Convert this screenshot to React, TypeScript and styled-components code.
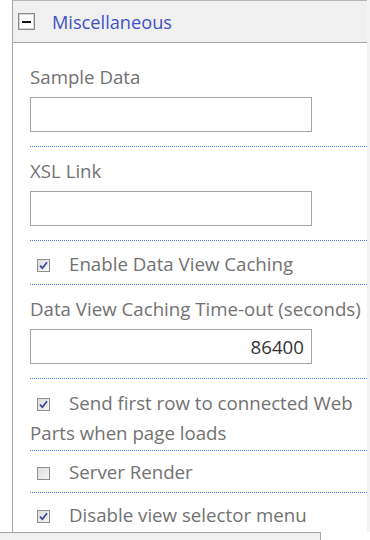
import React from 'react';
import styled, { createGlobalStyle } from 'styled-components';

const GlobalStyle = createGlobalStyle`
  html, body {
    margin: 0;
    padding: 0;
    background: #ffffff;
  }
  body {
    font-family: 'Open Sans', 'Noto Sans', sans-serif;
  }
`;

const Page = styled.div`
  width: 370px;
  height: 540px;
  display: flex;
  flex-direction: column;
  overflow: hidden;
`;

const Frame = styled.div`
  height: 532px;
  flex-shrink: 0;
  display: flex;
`;

const Panel = styled.div`
  margin-left: 12px;
  width: 354px;
  border-left: 1px solid #a6a6a6;
  overflow: hidden;
`;

const ScrollEdge = styled.div`
  flex: 1;
  background: #f3f3f3;
`;

const Footer = styled.div`
  height: 7px;
  width: 320px;
  border-top: 1px solid #a6a6a6;
  border-right: 1px solid #a6a6a6;
  background: #f0f0f0;
`;

const Header = styled.div`
  height: 41px;
  display: flex;
  align-items: center;
  background: #f0f0f0;
  border-top: 1px solid #b4b4b4;
  border-bottom: 1px solid #a6a6a6;
  padding-left: 5px;
`;

const Toggle = styled.span`
  box-sizing: border-box;
  width: 17px;
  height: 17px;
  border: 1px solid #8a8a8a;
  box-shadow: inset 0 0 0 1px #d4d4d4;
  background: #ffffff;
  display: flex;
  align-items: center;
  justify-content: center;
  margin-right: 17px;

  &::after {
    content: '';
    width: 9px;
    height: 2px;
    background: #111111;
  }
`;

const Title = styled.span`
  font-size: 18.2px;
  color: #3f51c6;
  line-height: 24px;
`;

const Field = styled.div<{ $first?: boolean }>`
  margin-left: 17px;
  padding: ${(p) => (p.$first ? '21px' : '11px')} 0 14px 0;
  border-bottom: 1px dotted #4f73d9;
  display: flex;
  flex-direction: column;
  gap: 7px;
`;

const Label = styled.div`
  font-size: 18.7px;
  line-height: 26px;
  color: #727272;
  white-space: nowrap;
`;

const TextBox = styled.div<{ $align?: 'left' | 'right' }>`
  box-sizing: border-box;
  width: 282px;
  height: 35px;
  border: 1px solid #a6a6a6;
  background: #ffffff;
  font-size: 18.7px;
  line-height: 33px;
  color: #333333;
  padding: 0 7px;
  text-align: ${(p) => p.$align ?? 'left'};
`;

const CheckRow = styled.div<{ $top: number; $bottom: number }>`
  margin-left: 17px;
  padding: ${(p) => p.$top}px 0 ${(p) => p.$bottom}px;
  border-bottom: 1px dotted #4f73d9;
  font-size: 18.7px;
  line-height: 30px;
  color: #727272;
`;

const LastRow = styled(CheckRow)`
  border-bottom: none;
`;

const Box = styled.span`
  box-sizing: border-box;
  display: inline-block;
  vertical-align: -1px;
  width: 13px;
  height: 13px;
  margin: 0 19px 0 7px;
  border: 1px solid #8e8f8f;
  background: linear-gradient(135deg, #dcdcdc 0%, #f6f6f6 100%);
  position: relative;

  svg {
    position: absolute;
    left: 1px;
    top: 1px;
  }
`;

function Check({ checked }: { checked?: boolean }) {
  return (
    <Box>
      {checked && (
        <svg width="9" height="9" viewBox="0 0 9 9">
          <path d="M1 4.6 L3.4 7.2 L8 1.2" fill="none" stroke="#34449a" strokeWidth="1.7" />
        </svg>
      )}
    </Box>
  );
}

export default function App() {
  return (
    <Page>
      <GlobalStyle />
      <Frame>
        <Panel>
          <Header>
            <Toggle />
            <Title>Miscellaneous</Title>
          </Header>

          <Field $first>
            <Label>Sample Data</Label>
            <TextBox />
          </Field>

          <Field>
            <Label>XSL Link</Label>
            <TextBox />
          </Field>

          <CheckRow $top={8} $bottom={5}>
            <Check checked />
            Enable Data View Caching
          </CheckRow>

          <Field>
            <Label>Data View Caching Time-out (seconds)</Label>
            <TextBox $align="right">86400</TextBox>
          </Field>

          <CheckRow $top={9} $bottom={2}>
            <Check checked />
            Send first row to connected Web Parts when page loads
          </CheckRow>

          <CheckRow $top={6} $bottom={5}>
            <Check />
            Server Render
          </CheckRow>

          <LastRow $top={7} $bottom={5}>
            <Check checked />
            Disable view selector menu
          </LastRow>
        </Panel>
        <ScrollEdge />
      </Frame>
      <Footer />
    </Page>
  );
}
